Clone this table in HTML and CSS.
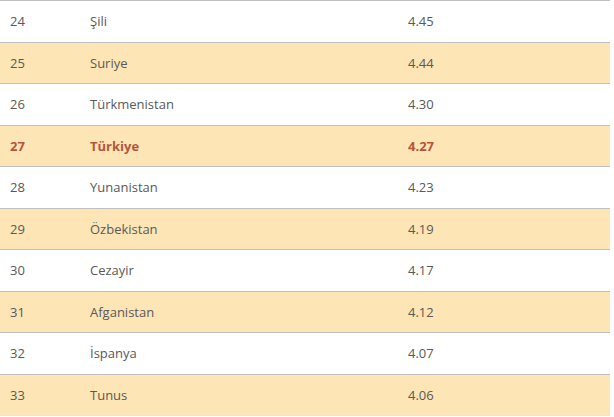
FILE: index.html
```html
<!DOCTYPE html>
<html lang="tr">
<head>
<meta charset="utf-8">
<link rel="stylesheet" href="styles.css">
</head>
<body>
<table class="rank">
<tbody>
<tr><td class="c-no">24</td><td class="c-name">Şili</td><td class="c-val">4.45</td></tr>
<tr class="alt"><td class="c-no">25</td><td class="c-name">Suriye</td><td class="c-val">4.44</td></tr>
<tr><td class="c-no">26</td><td class="c-name">Türkmenistan</td><td class="c-val">4.30</td></tr>
<tr class="alt hl"><td class="c-no">27</td><td class="c-name">Türkiye</td><td class="c-val">4.27</td></tr>
<tr><td class="c-no">28</td><td class="c-name">Yunanistan</td><td class="c-val">4.23</td></tr>
<tr class="alt"><td class="c-no">29</td><td class="c-name">Özbekistan</td><td class="c-val">4.19</td></tr>
<tr><td class="c-no">30</td><td class="c-name">Cezayir</td><td class="c-val">4.17</td></tr>
<tr class="alt"><td class="c-no">31</td><td class="c-name">Afganistan</td><td class="c-val">4.12</td></tr>
<tr><td class="c-no">32</td><td class="c-name">İspanya</td><td class="c-val">4.07</td></tr>
<tr class="alt"><td class="c-no">33</td><td class="c-name">Tunus</td><td class="c-val">4.06</td></tr>
</tbody>
</table>
</body>
</html>
```
FILE: styles.css
```css
html, body {
  margin: 0;
  padding: 0;
  background: #ffffff;
}
.rank {
  width: 610px;
  border-collapse: collapse;
  border-bottom: 1px solid #ece3cf;
  font-family: "Open Sans", "Noto Sans", sans-serif;
  font-size: 13px;
  color: #595959;
}
.rank tr {
  height: 41.5px;
  border-top: 1px solid #c0c0c0;
}
.rank tr.alt {
  background: #fde5b5;
}
.rank td {
  padding: 0;
  vertical-align: middle;
}
.c-no {
  width: 80px;
  padding-left: 10px !important;
}
.c-name {
  width: 318px;
}
.rank tr.hl td {
  color: #b4553b;
  font-weight: 700;
}
```
